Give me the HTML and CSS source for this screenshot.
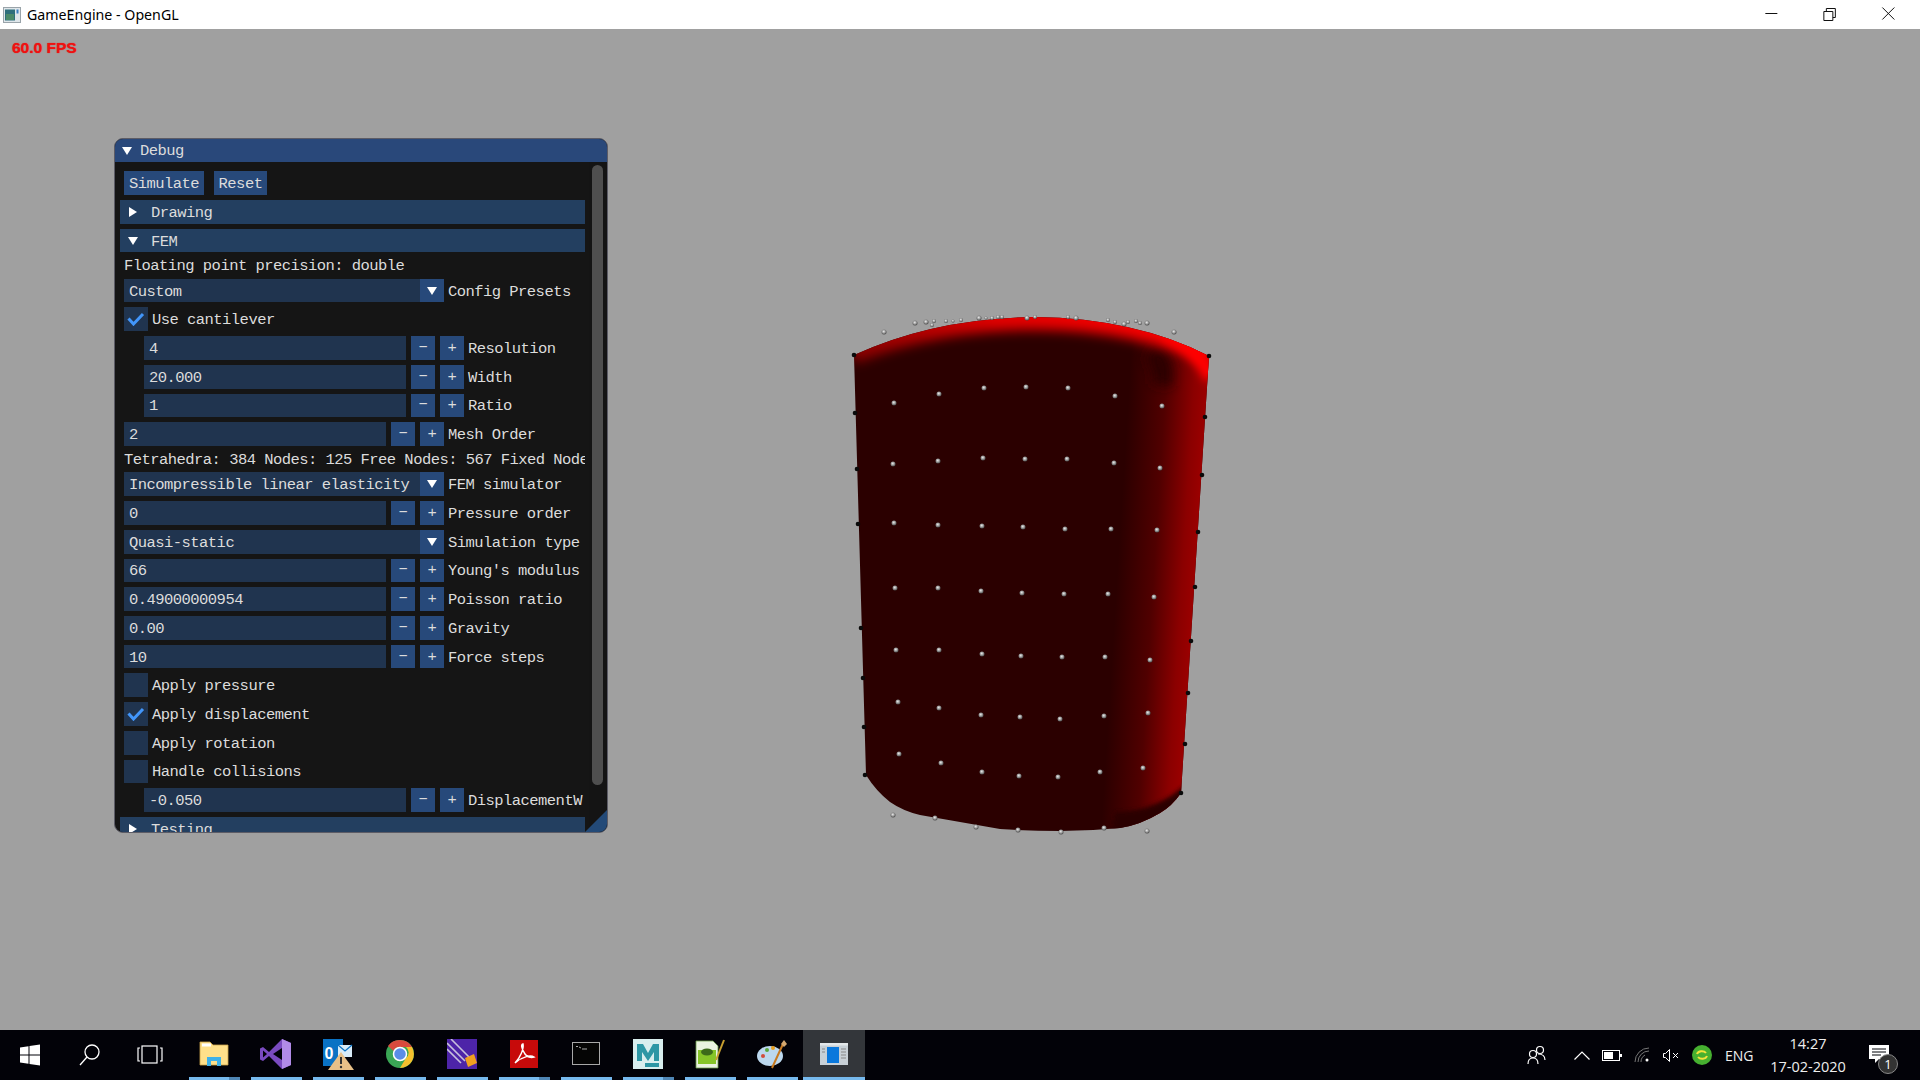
FILE: index.html
```html
<!DOCTYPE html>
<html lang="en">
<head>
<meta charset="utf-8">
<title>GameEngine - OpenGL</title>
<link rel="stylesheet" href="styles.css">
</head>
<body>
<header class="titlebar">
  <svg class="appicon" width="18" height="16" viewBox="0 0 18 16"><rect x=".5" y=".5" width="17" height="15" fill="#dfe6ea" stroke="#9aa4aa"/><rect x="2" y="2.500" width="10" height="11" fill="#2f6f7c"/><rect x="3" y="7" width="8" height="6" fill="#4b8a6a"/><rect x="13.500" y="2.500" width="2" height="4" fill="#3a7fc0"/></svg>
  <span class="apptitle">GameEngine - OpenGL</span>
  <div class="winbtns">
    <svg width="48" height="29" viewBox="0 0 48 29"><path d="M19 13.500h12" stroke="#111" fill="none"/></svg>
    <svg width="48" height="29" viewBox="0 0 48 29"><path d="M18.500 11.500h9v9h-9zM21 11.500v-3h9v9h-2.500" stroke="#111" fill="none"/></svg>
    <svg width="48" height="29" viewBox="0 0 48 29"><path d="M18 7.500l12 12M30 7.500l-12 12" stroke="#111" fill="none"/></svg>
  </div>
</header>

<main class="viewport">
  <svg class="scene" viewBox="0 29 1920 1001" width="1920" height="1001">
    <defs>
      <clipPath id="shape"><path d="M854 355Q935 318 1035 317Q1135 318 1209 356L1181 793Q1172 806 1160 813Q1140 825 1120 828Q1090 831 1060 831Q1030 831 1000 829L920 815Q903 811 890 802Q876 791 866 775Z"/></clipPath>
      <linearGradient id="side" gradientUnits="userSpaceOnUse" x1="1118" y1="560" x2="1197" y2="565"><stop offset="0" stop-color="#9c0000" stop-opacity="0"/><stop offset=".46" stop-color="#9c0000" stop-opacity=".33"/><stop offset=".82" stop-color="#9c0000" stop-opacity=".85"/><stop offset="1" stop-color="#9c0000"/></linearGradient>
      <linearGradient id="rim" gradientUnits="userSpaceOnUse" x1="854" y1="0" x2="1209" y2="0"><stop offset="0" stop-color="#8a0000"/><stop offset=".4" stop-color="#e00000"/><stop offset="1" stop-color="#ff0000"/></linearGradient>
      <filter id="soft" filterUnits="userSpaceOnUse" x="800" y="280" width="460" height="150"><feGaussianBlur stdDeviation="6"/></filter>
      <filter id="soft2" filterUnits="userSpaceOnUse" x="1080" y="300" width="180" height="560"><feGaussianBlur stdDeviation="4"/></filter>
      <filter id="soft3" filterUnits="userSpaceOnUse" x="1080" y="740" width="180" height="120"><feGaussianBlur stdDeviation="2"/></filter>
      <radialGradient id="ball" cx=".45" cy=".4" r=".65"><stop offset="0" stop-color="#ececec"/><stop offset=".5" stop-color="#979797"/><stop offset="1" stop-color="#3c3c3c"/></radialGradient>
    </defs>
    <g clip-path="url(#shape)">
      <rect x="840" y="300" width="380" height="540" fill="#2b0000"/>
      <rect x="1100" y="300" width="120" height="540" fill="url(#side)"/>
      <path d="M1150 352Q1165 360 1162 385" fill="none" stroke="#2b0000" stroke-width="20" filter="url(#soft)"/>
      <path d="M850 350Q935 316 1035 316Q1135 316 1212 350" fill="none" stroke="url(#rim)" stroke-width="28" filter="url(#soft)"/>
      <path d="M1165 332Q1195 345 1212 378" fill="none" stroke="#ff0000" stroke-width="16" filter="url(#soft2)"/>
      <path d="M1115 812Q1160 812 1192 778L1192 840L1110 840Z" fill="#2b0000" filter="url(#soft3)"/>
    </g>
    <g fill="url(#ball)">
      <circle cx="884" cy="332" r="2.500"/><circle cx="915" cy="323" r="2.500"/><circle cx="926" cy="322" r="2.500"/><circle cx="934" cy="321" r="2"/><circle cx="932" cy="325" r="2"/><circle cx="946" cy="321" r="2"/><circle cx="953" cy="321" r="1.500"/><circle cx="961" cy="320" r="2"/><circle cx="979" cy="318" r="2.500"/><circle cx="986" cy="318" r="1.500"/><circle cx="992" cy="318" r="2"/><circle cx="998" cy="317" r="2"/><circle cx="1002" cy="317" r="2"/><circle cx="1027" cy="318" r="2.500"/><circle cx="1035" cy="317" r="2"/><circle cx="1068" cy="317" r="2"/><circle cx="1076" cy="318" r="2.500"/><circle cx="1108" cy="320" r="2"/><circle cx="1115" cy="322" r="2"/><circle cx="1124" cy="324" r="2.500"/><circle cx="1128" cy="322" r="2"/><circle cx="1136" cy="321" r="2"/><circle cx="1140" cy="323" r="2"/><circle cx="1147" cy="323" r="2.500"/><circle cx="1174" cy="332" r="2.500"/>
      <circle cx="894" cy="403" r="2.500"/><circle cx="939" cy="394" r="2.500"/><circle cx="984" cy="388" r="2.500"/><circle cx="1026" cy="387" r="2.500"/><circle cx="1068" cy="388" r="2.500"/><circle cx="1115" cy="396" r="2.500"/><circle cx="1162" cy="406" r="2.500"/>
      <circle cx="893" cy="464" r="2.500"/><circle cx="938" cy="461" r="2.500"/><circle cx="983" cy="458" r="2.500"/><circle cx="1025" cy="459" r="2.500"/><circle cx="1067" cy="459" r="2.500"/><circle cx="1114" cy="463" r="2.500"/><circle cx="1160" cy="468" r="2.500"/>
      <circle cx="894" cy="523" r="2.500"/><circle cx="938" cy="525" r="2.500"/><circle cx="982" cy="526" r="2.500"/><circle cx="1023" cy="527" r="2.500"/><circle cx="1065" cy="529" r="2.500"/><circle cx="1111" cy="529" r="2.500"/><circle cx="1157" cy="530" r="2.500"/>
      <circle cx="895" cy="588" r="2.500"/><circle cx="938" cy="588" r="2.500"/><circle cx="981" cy="591" r="2.500"/><circle cx="1022" cy="593" r="2.500"/><circle cx="1064" cy="594" r="2.500"/><circle cx="1108" cy="594" r="2.500"/><circle cx="1154" cy="597" r="2.500"/>
      <circle cx="896" cy="650" r="2.500"/><circle cx="939" cy="650" r="2.500"/><circle cx="982" cy="654" r="2.500"/><circle cx="1021" cy="656" r="2.500"/><circle cx="1062" cy="657" r="2.500"/><circle cx="1105" cy="657" r="2.500"/><circle cx="1150" cy="660" r="2.500"/>
      <circle cx="898" cy="702" r="2.500"/><circle cx="939" cy="708" r="2.500"/><circle cx="981" cy="715" r="2.500"/><circle cx="1020" cy="717" r="2.500"/><circle cx="1060" cy="719" r="2.500"/><circle cx="1104" cy="716" r="2.500"/><circle cx="1148" cy="713" r="2.500"/>
      <circle cx="899" cy="754" r="2.500"/><circle cx="941" cy="763" r="2.500"/><circle cx="982" cy="772" r="2.500"/><circle cx="1019" cy="776" r="2.500"/><circle cx="1058" cy="777" r="2.500"/><circle cx="1100" cy="772" r="2.500"/><circle cx="1143" cy="768" r="2.500"/>
      <circle cx="893" cy="815" r="2.500"/><circle cx="935" cy="818" r="2.500"/><circle cx="976" cy="827" r="2.500"/><circle cx="1018" cy="830" r="2.500"/><circle cx="1061" cy="832" r="2.500"/><circle cx="1104" cy="828" r="2.500"/><circle cx="1147" cy="831" r="2.500"/>
    </g>
    <g fill="#0a0a0a">
      <circle cx="854" cy="355" r="2.300"/><circle cx="855" cy="413" r="2.300"/><circle cx="857" cy="469" r="2.300"/><circle cx="858" cy="524" r="2.300"/><circle cx="861" cy="628" r="2.300"/><circle cx="863" cy="678" r="2.300"/><circle cx="864" cy="727" r="2.300"/><circle cx="865" cy="775" r="2.300"/>
      <circle cx="1209" cy="356" r="2.300"/><circle cx="1205" cy="417" r="2.300"/><circle cx="1202" cy="475" r="2.300"/><circle cx="1198" cy="532" r="2.300"/><circle cx="1195" cy="587" r="2.300"/><circle cx="1191" cy="641" r="2.300"/><circle cx="1188" cy="693" r="2.300"/><circle cx="1185" cy="744" r="2.300"/><circle cx="1181" cy="793" r="2.300"/>
    </g>
  </svg>

  <div class="fps">60.0 FPS</div>

  <section class="panel">
    <div class="ptitle">
      <svg class="tri" width="10" height="10" viewBox="0 0 10 10"><path d="M0 1h10L5 9z"/></svg>
      <span>Debug</span>
    </div>
    <div class="pbody">
      <div class="row btns"><button class="btn">Simulate</button><button class="btn">Reset</button></div>
      <div class="row head">
        <svg class="tri" width="10" height="10" viewBox="0 0 10 10"><path d="M1 0v10l8-5z"/></svg><span>Drawing</span>
      </div>
      <div class="row head">
        <svg class="tri" width="10" height="10" viewBox="0 0 10 10"><path d="M0 1h10L5 9z"/></svg><span>FEM</span>
      </div>
      <div class="txt">Floating point precision: double</div>
      <div class="row">
        <div class="combo"><span>Custom</span><i class="arrow"><svg class="tri" width="10" height="10" viewBox="0 0 10 10"><path d="M0 1h10L5 9z"/></svg></i></div><span class="lab">Config Presets</span>
      </div>
      <div class="row"><i class="chk"><svg width="18" height="14" viewBox="0 0 18 14"><path d="M1.500 6.500L6.500 12L16 2" fill="none" stroke="#4296fa" stroke-width="3"/></svg></i><span class="chklab">Use cantilever</span></div>
      <div class="row ind"><div class="num">4</div><b class="step">−</b><b class="step">+</b><span class="lab">Resolution</span></div>
      <div class="row ind"><div class="num">20.000</div><b class="step">−</b><b class="step">+</b><span class="lab">Width</span></div>
      <div class="row ind"><div class="num">1</div><b class="step">−</b><b class="step">+</b><span class="lab">Ratio</span></div>
      <div class="row"><div class="num">2</div><b class="step">−</b><b class="step">+</b><span class="lab">Mesh Order</span></div>
      <div class="txt">Tetrahedra: 384 Nodes: 125 Free Nodes: 567 Fixed Nodes</div>
      <div class="row">
        <div class="combo"><span>Incompressible linear elasticity</span><i class="arrow"><svg class="tri" width="10" height="10" viewBox="0 0 10 10"><path d="M0 1h10L5 9z"/></svg></i></div><span class="lab">FEM simulator</span>
      </div>
      <div class="row"><div class="num">0</div><b class="step">−</b><b class="step">+</b><span class="lab">Pressure order</span></div>
      <div class="row">
        <div class="combo"><span>Quasi-static</span><i class="arrow"><svg class="tri" width="10" height="10" viewBox="0 0 10 10"><path d="M0 1h10L5 9z"/></svg></i></div><span class="lab">Simulation type</span>
      </div>
      <div class="row"><div class="num">66</div><b class="step">−</b><b class="step">+</b><span class="lab">Young's modulus</span></div>
      <div class="row"><div class="num">0.49000000954</div><b class="step">−</b><b class="step">+</b><span class="lab">Poisson ratio</span></div>
      <div class="row"><div class="num">0.00</div><b class="step">−</b><b class="step">+</b><span class="lab">Gravity</span></div>
      <div class="row"><div class="num">10</div><b class="step">−</b><b class="step">+</b><span class="lab">Force steps</span></div>
      <div class="row"><i class="chk"></i><span class="chklab">Apply pressure</span></div>
      <div class="row"><i class="chk"><svg width="18" height="14" viewBox="0 0 18 14"><path d="M1.500 6.500L6.500 12L16 2" fill="none" stroke="#4296fa" stroke-width="3"/></svg></i><span class="chklab">Apply displacement</span></div>
      <div class="row"><i class="chk"></i><span class="chklab">Apply rotation</span></div>
      <div class="row"><i class="chk"></i><span class="chklab">Handle collisions</span></div>
      <div class="row ind"><div class="num">-0.050</div><b class="step">−</b><b class="step">+</b><span class="lab">DisplacementW</span></div>
      <div class="row head">
        <svg class="tri" width="10" height="10" viewBox="0 0 10 10"><path d="M1 0v10l8-5z"/></svg><span>Testing</span>
      </div>
    </div>
    <div class="scrollbar"><div class="thumb"></div></div>
    <svg class="grip" width="22" height="22" viewBox="0 0 22 22"><path d="M22 0V22H0z" fill="#234a78"/></svg>
  </section>
</main>

<footer class="taskbar">
  <div class="sysbtn"><svg width="22" height="22" viewBox="0 0 22 22" fill="#fff"><path d="M1 3.500l8.500-1.200V10.500H1zM10.500 2.100L21 .6V10.500H10.500zM1 11.500h8.500v8.200L1 18.500zM10.500 11.500H21v9.900L10.500 19.900z"/></svg></div>
  <div class="sysbtn"><svg width="22" height="24" viewBox="0 0 22 24" fill="none" stroke="#fff" stroke-width="1.300"><circle cx="13" cy="9" r="7"/><path d="M8 14L1 22"/></svg></div>
  <div class="sysbtn"><svg width="26" height="20" viewBox="0 0 26 20" fill="none" stroke="#fff" stroke-width="1.200"><rect x="5" y="1" width="15" height="17"/><path d="M3 3H1v13h2M23 3h2v13h-2"/></svg></div>
  <div class="gapbar"></div>

  <div class="tbitem multi"><svg width="30" height="26" viewBox="0 0 30 26"><path d="M1 1h10l3 3h15v20H1z" fill="#ffe08a" stroke="#c9a24a" stroke-width=".8"/><rect x="3" y="2.500" width="9" height="3" fill="#fff"/><path d="M8 25v-9h14v9h-4v-5h-6v5z" fill="#3fb1e8"/></svg></div>
  <div class="tbitem"><svg width="32" height="32" viewBox="0 0 32 32"><path d="M22 1L31 5V27L22 31L9 18L3 23L0 21.500V10.500L3 9L9 14z" fill="#7a4bc0"/><path d="M22 1L31 5V27L22 31z" fill="#b18be8"/><path d="M22 10V22L13 16z" fill="#000208"/><path d="M3 12.500L7 16L3 19.500z" fill="#000208"/></svg></div>
  <div class="tbitem"><svg width="32" height="32" viewBox="0 0 32 32"><rect x="1" y="1" width="20" height="27" fill="#0a72c4"/><rect x="16" y="7" width="14" height="12" fill="#d8ecf9"/><path d="M16 7l7 6 7-6" fill="none" stroke="#0a72c4" stroke-width="1.300"/><text x="2.500" y="21" class="olk">0</text><path d="M20 14L33 32H7z" transform="translate(-1 0)" fill="#e8c088"/><path d="M19 19v7" stroke="#333" stroke-width="2"/><circle cx="19" cy="29" r="1.200" fill="#333"/></svg></div>
  <div class="tbitem"><svg width="30" height="30" viewBox="0 0 30 30"><circle cx="15" cy="15" r="14" fill="#3aa655"/><path d="M15 1A14 14 0 0 1 27 8H15A7 7 0 0 0 8.500 12L3 7A14 14 0 0 1 15 1z" fill="#d94a3d"/><path d="M27 8A14 14 0 0 1 15 29L21 19A7 7 0 0 0 21 8z" fill="#f5c02e"/><circle cx="15" cy="15" r="6.500" fill="#5a8de8" stroke="#fff" stroke-width="1.500"/></svg></div>
  <div class="tbitem"><svg width="30" height="30" viewBox="0 0 30 30"><rect width="30" height="30" fill="#4d24a8"/><path d="M0 4L18 22M4 0L22 18M0 10L14 24" stroke="#c8c0dc" stroke-width="1.600"/><path d="M18 19l9-4 3 9-9 4z" fill="#f0a020"/></svg></div>
  <div class="tbitem multi"><svg width="28" height="28" viewBox="0 0 28 28"><rect width="28" height="28" fill="#c70a0a"/><path d="M5 23C10 18 14 9 13 4C11 4 11 8 15 14C17 17 21 18 24 17C21 15 13 16 5 23z" fill="none" stroke="#fff" stroke-width="1.500"/></svg></div>
  <div class="tbitem"><svg width="28" height="23" viewBox="0 0 28 23"><rect x=".5" y=".5" width="27" height="22" fill="#050505" stroke="#a8a8a8"/><path d="M4 4.500h2M7 5l2 1M10 7h5" stroke="#aaa"/></svg></div>
  <div class="tbitem multi"><svg width="30" height="30" viewBox="0 0 30 30"><rect width="30" height="30" fill="#d8eeee"/><path d="M4 22V5h6l5 9 5-9h6v17h-5V13l-6 9-6-9v9z" fill="#2d97a5"/><rect x="12" y="24" width="14" height="4" fill="#2d97a5"/></svg></div>
  <div class="tbitem"><svg width="30" height="30" viewBox="0 0 30 30"><path d="M1 2h17l5 5v22H1z" fill="#eaf3e0" stroke="#6a9a4a" stroke-width=".8"/><rect x="3" y="11" width="18" height="14" fill="#86c528"/><ellipse cx="12" cy="13" rx="6" ry="3.500" fill="#3c6a1a"/><path d="M21 21L29 1" stroke="#c8a030" stroke-width="2"/></svg></div>
  <div class="tbitem"><svg width="30" height="30" viewBox="0 0 30 30"><ellipse cx="13" cy="17" rx="13" ry="10" fill="#bcd8ee"/><circle cx="6" cy="17" r="2" fill="#d24c3c"/><circle cx="10" cy="11" r="2" fill="#5aa83c"/><circle cx="16" cy="9" r="2" fill="#e8a020"/><path d="M15 29L26 5" stroke="#c87a20" stroke-width="2"/><path d="M24 5l3-4 3 4-3 3z" fill="#d4a870"/></svg></div>
  <div class="tbitem active"><svg width="28" height="22" viewBox="0 0 28 22"><rect width="28" height="22" fill="#c8d0d6"/><rect y="0" width="28" height="2.500" fill="#e4e8ea"/><rect x="7" y="4" width="12" height="16" fill="#0a78dc"/><path d="M21 6h5M21 9h5M21 12h5M21 15h5M2 6h3M2 9h3" stroke="#888"/></svg></div>

  <div class="tray">
    <svg class="ti1" width="20" height="20" viewBox="0 0 20 20" fill="none" stroke="#fff" stroke-width="1.200"><circle cx="13" cy="5" r="3.500"/><circle cx="6" cy="9" r="3.500"/><path d="M1 19c0-4 2-6 5-6s5 2 5 6M11 9c4 0 7 2 7 6"/></svg>
    <svg class="ti2" width="16" height="9" viewBox="0 0 16 9" fill="none" stroke="#fff" stroke-width="1.200"><path d="M.5 8.500L8 1l7.500 7.500"/></svg>
    <svg class="ti3" width="20" height="11" viewBox="0 0 20 11"><rect x=".5" y=".5" width="17" height="10" fill="none" stroke="#fff"/><rect x="2" y="2" width="9" height="7" fill="#fff"/><rect x="18" y="4" width="2" height="3" fill="#fff"/></svg>
    <svg class="ti4" width="16" height="16" viewBox="0 0 16 16" fill="none" stroke="#777"><path d="M1 15A14 14 0 0 1 15 1M4 15A11 11 0 0 1 15 4M7 15A8 8 0 0 1 11 8"/><circle cx="13" cy="13" r="1.500" fill="#fff" stroke="none"/></svg>
    <svg class="ti5" width="18" height="13" viewBox="0 0 18 13" fill="none" stroke="#fff"><path d="M.5 4.500h2l4-4v12l-4-4h-2zM10 4l5 5M15 4l-5 5"/></svg>
    <svg class="ti6" width="20" height="20" viewBox="0 0 20 20"><circle cx="10" cy="10" r="10" fill="#46b030"/><path d="M5 9a5 4 0 0 1 9-1M15 11a5 4 0 0 1-9 1" fill="none" stroke="#f3e23a" stroke-width="2"/></svg>
    <span class="eng">ENG</span>
    <div class="clock"><span>14:27</span><span>17-02-2020</span></div>
    <div class="notif">
      <svg width="20" height="18" viewBox="0 0 20 18"><path d="M0 0h20v14H10l-4 4v-4H0z" fill="#fff"/><path d="M3 4h14M3 7h14M3 10h9" stroke="#000208"/></svg>
      <span class="badge">1</span>
    </div>
  </div>
</footer>
</body>
</html>
```
FILE: styles.css
```css
* { box-sizing: border-box; }
html, body { margin: 0; height: 100%; }
body {
  width: 1920px;
  height: 1080px;
  overflow: hidden;
  display: flex;
  flex-direction: column;
  font-family: "Open Sans", "Liberation Sans", sans-serif;
}

/* window chrome */
.titlebar {
  height: 29px;
  background: #fff;
  display: flex;
  align-items: center;
  padding-left: 3px;
  flex: none;
}
.apptitle { margin-left: 6px; font-size: 14.200px; color: #000; font-family: "Noto Sans", sans-serif; }
.winbtns { margin-left: auto; display: flex; padding-right: 2.500px; height: 29px; }
.winbtns svg { display: block; width: 58.700px; }

/* GL viewport */
.viewport { position: relative; flex: 1; background: #a0a0a0; }
.scene { position: absolute; left: 0; top: 0; }
.fps {
  position: absolute;
  left: 12px;
  top: 10px;
  color: #ee1111;
  font: bold 15.500px "Liberation Sans", sans-serif;
  text-shadow: 0 0 1px #ee1111;
}

/* ImGui panel */
.panel {
  position: absolute;
  left: 114px;
  top: 109px;
  width: 494px;
  height: 695px;
  background: #151515;
  border: 1px solid #5c5c66;
  border-radius: 9px;
  overflow: hidden;
  font-family: "Liberation Mono", monospace;
  font-size: 15.500px;
  letter-spacing: -0.540px;
  color: #dcdcdc;
}
.ptitle {
  height: 23px;
  background: #29487a;
  display: flex;
  align-items: center;
  padding-left: 7px;
  gap: 8px;
}
.row span, .num, .btn { padding-top: 2px; }
.tri { fill: #fff; flex: none; display: block; }
.pbody {
  width: 470px;
  height: 670px;
  padding: 9.300px 0 0 9px;
  display: flex;
  flex-direction: column;
  gap: 5px;
  overflow: hidden;
}
.row {
  flex: none;
  height: 23.720px;
  display: flex;
  align-items: center;
  white-space: nowrap;
  width: 461px;
  overflow: hidden;
}
.btns { gap: 10px; }
.btn {
  height: 100%;
  padding-left: 5px;
  padding-right: 4.500px;
  padding-bottom: 0;
  border: 0;
  background: #27497a;
  color: inherit;
  font: inherit;
  letter-spacing: inherit;
}
.head {
  margin-left: -4px;
  width: 465px;
  background: #233f60;
  padding-left: 8px;
  gap: 13px;
}
.txt {
  flex: none;
  height: 16.300px;
  line-height: 18px;
  white-space: nowrap;
  overflow-x: clip;
  width: 461px;
}
.combo {
  width: 320px;
  height: 100%;
  background: #20344f;
  display: flex;
  align-items: center;
  justify-content: space-between;
  padding-left: 5px;
  flex: none;
}
.arrow {
  width: 24px;
  height: 100%;
  background: #27497a;
  display: flex;
  align-items: center;
  justify-content: center;
}
.lab { margin-left: 4px; }
.ind { padding-left: 20px; }
.num {
  width: 262px;
  height: 100%;
  background: #20344f;
  padding-left: 5px;
  display: flex;
  align-items: center;
  flex: none;
}
.step {
  width: 24px;
  height: 100%;
  margin-left: 5px;
  background: #27497a;
  display: flex;
  align-items: center;
  justify-content: center;
  font-weight: normal;
  flex: none;
}
.chk {
  width: 24px;
  height: 100%;
  background: #20344f;
  display: flex;
  align-items: center;
  justify-content: center;
  flex: none;
}
.chklab { margin-left: 4px; }
.scrollbar {
  position: absolute;
  right: 0;
  top: 23px;
  width: 18px;
  bottom: 0;
  background: #141414;
  padding: 3px 4px 0 3px;
}
.thumb { height: 620px; background: #4f4f4f; border-radius: 6px; }
.grip { position: absolute; right: 0; bottom: 0; display: block; }

/* taskbar */
.taskbar {
  flex: none;
  height: 50px;
  background: #020208;
  display: flex;
  align-items: stretch;
  color: #fff;
}
.sysbtn {
  width: 60px;
  display: flex;
  align-items: center;
  justify-content: center;
  flex: none;
}
.gapbar { width: 3px; flex: none; }
.tbitem {
  position: relative;
  width: 62px;
  flex: none;
  display: flex;
  align-items: center;
  justify-content: center;
  padding-bottom: 3px;
}
.tbitem::after {
  content: "";
  position: absolute;
  left: 6px;
  width: 51px;
  bottom: 0;
  height: 3px;
  background: #76b9ed;
}
.tbitem.multi::before {
  content: "";
  position: absolute;
  left: 46px;
  width: 11px;
  bottom: 0;
  height: 3px;
  background: #4f86b5;
  z-index: 1;
}
.tbitem.active { background: #33363a; }
.tbitem.active::after { left: 0; width: 100%; }
.olk { font: bold 16px "Liberation Sans", sans-serif; fill: #fff; }

.tray {
  margin-left: auto;
  display: flex;
  align-items: center;
  font-family: "Open Sans", sans-serif;
}
.tray svg { display: block; flex: none; }
.ti1 { margin-right: 27px; }
.ti2 { margin-right: 12px; }
.ti3 { margin-right: 12px; }
.ti4 { margin-right: 13px; }
.ti5 { margin-right: 11px; }
.ti6 { margin-right: 13px; }
.eng { font-size: 14px; width: 28px; color: #eee; margin-right: 17px; }
.clock {
  width: 76px;
  display: flex;
  flex-direction: column;
  align-items: center;
  font-size: 14.500px;
  line-height: 23.500px;
  color: #eee;
  margin-right: 23px;
}
.notif { position: relative; width: 20px; margin-right: 31px; margin-bottom: 2px; }
.badge {
  position: absolute;
  left: 9px;
  top: 9px;
  width: 20px;
  height: 20px;
  border-radius: 50%;
  background: #333;
  border: 1px solid #888;
  font-size: 13px;
  line-height: 18px;
  text-align: center;
}
```
